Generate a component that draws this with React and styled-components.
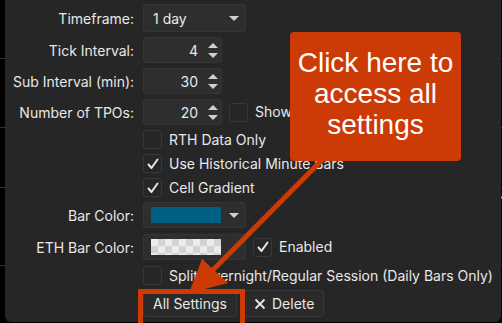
import React from 'react'
import styled, { createGlobalStyle } from 'styled-components'

const Global = createGlobalStyle`
    html, body {
        margin: 0;
        background: #000;
    }
    * { box-sizing: border-box; }
`

function Check() {
    return (
        <svg width="14" height="14" viewBox="0 0 14 14">
            <polyline points="2.5,7.5 5.5,11 11.5,2.5" fill="none" stroke="#e6e6e6" strokeWidth="2" strokeLinecap="round" strokeLinejoin="round" />
        </svg>
    )
}

function Checkbox({ checked }) {
    return <Box>{checked && <Check />}</Box>
}

function NumberField({ value }) {
    return (
        <NumberBox>
            <Value>{value}</Value>
            <Spinner>
                <Up />
                <Down />
            </Spinner>
        </NumberBox>
    )
}

function App() {
    return (
        <Page>
            <Global />
            <Panel>
                <Top>
                    <Row>
                        <Label>Timeframe:</Label>
                        <Select $h={28}>
                            <SelectText>1 day</SelectText>
                            <Caret />
                        </Select>
                    </Row>
                    <Row>
                        <Label>Tick Interval:</Label>
                        <NumberField value="4" />
                    </Row>
                    <Row>
                        <Label>Sub Interval (min):</Label>
                        <NumberField value="30" />
                    </Row>
                    <Row>
                        <Label>Number of TPOs:</Label>
                        <Inline>
                            <NumberField value="20" />
                            <Checkbox />
                            <Text>Show</Text>
                        </Inline>
                    </Row>
                </Top>
                <Bottom>
                    <Row $h={18}>
                        <span />
                        <Inline>
                            <Checkbox />
                            <Text>RTH Data Only</Text>
                        </Inline>
                    </Row>
                    <Row $h={18}>
                        <span />
                        <Inline>
                            <Checkbox checked />
                            <Text>Use Historical Minute Bars</Text>
                        </Inline>
                    </Row>
                    <Row $h={18}>
                        <span />
                        <Inline>
                            <Checkbox checked />
                            <Text>Cell Gradient</Text>
                        </Inline>
                    </Row>
                    <Row>
                        <Label>Bar Color:</Label>
                        <Select $h={26}>
                            <Swatch $color="#005f85" />
                            <Caret />
                        </Select>
                    </Row>
                    <Row>
                        <Label>ETH Bar Color:</Label>
                        <Inline>
                            <Select $h={26}>
                                <Swatch $checkered />
                            </Select>
                            <Checkbox checked />
                            <Text>Enabled</Text>
                        </Inline>
                    </Row>
                    <Row $h={18}>
                        <span />
                        <Inline>
                            <Checkbox />
                            <Text>Split Overnight/Regular Session (Daily Bars Only)</Text>
                        </Inline>
                    </Row>
                    <Row $h={27}>
                        <span />
                        <Buttons>
                            <Button>All Settings</Button>
                            <Button>
                                <svg width="12" height="12" viewBox="0 0 12 12">
                                    <path d="M1.5 1.5 L10.5 10.5 M10.5 1.5 L1.5 10.5" stroke="#e6e6e6" strokeWidth="1.8" />
                                </svg>
                                Delete
                            </Button>
                        </Buttons>
                    </Row>
                </Bottom>
            </Panel>

            <Callout>Click here to<br />access all<br />settings</Callout>
            <Annotation width="502" height="323" viewBox="0 0 502 323">
                <line x1="323" y1="159" x2="207" y2="276" stroke="#cc3a06" strokeWidth="5" />
                <polygon points="202,259 228,283 189,293" fill="#cc3a06" />
                <rect x="140.5" y="291.5" width="102" height="40" fill="none" stroke="#cc3a06" strokeWidth="5" />
            </Annotation>
        </Page>
    )
}

export default App

const Page = styled.div`
    position: relative;
    width: 502px;
    height: 323px;
    overflow: hidden;
    background-color: #000;
    background-image:
        linear-gradient(#333, #333),
        linear-gradient(#333, #333),
        linear-gradient(#333, #333),
        linear-gradient(#333, #333),
        linear-gradient(#2f8fdc, #2f8fdc);
    background-size: 100% 1px, 100% 1px, 100% 1px, 100% 1px, 2px 3px;
    background-position: 0 58px, 0 127px, 0 187px, 0 265px, 500px 196px;
    background-repeat: no-repeat;
    font-family: Inter, "Noto Sans", sans-serif;
    font-size: 14px;
    color: #e8e8e8;
`
const Panel = styled.div`
    margin-left: 5px;
    width: 496px;
    height: 322px;
    background: #262626;
    border-radius: 0 0 6px 6px;
    padding: 4px 8px 0;
    display: flex;
    flex-direction: column;
    gap: 5px;
`
const Top = styled.div`
    display: flex;
    flex-direction: column;
    gap: 5px;
`
const Bottom = styled.div`
    display: flex;
    flex-direction: column;
    gap: 6px;
`
const Row = styled.div`
    display: grid;
    grid-template-columns: 121px auto;
    column-gap: 9px;
    align-items: center;
    height: ${p => (p.$h ? p.$h + 'px' : 'auto')};
`
const Label = styled.div`
    text-align: right;
    white-space: nowrap;
`
const Inline = styled.div`
    display: flex;
    align-items: center;
    gap: 7px;
    white-space: nowrap;
`
const Text = styled.span`
    line-height: 18px;
`
const Select = styled.div`
    width: 103px;
    height: ${p => p.$h}px;
    background: #2e2e2e;
    border: 1px solid #353535;
    border-radius: 3px;
    display: flex;
    align-items: center;
    justify-content: space-between;
    padding: 0 6px 0 7px;
`
const SelectText = styled.span`
    padding-left: 2px;
`
const Caret = styled.span`
    width: 0;
    height: 0;
    border-left: 5px solid transparent;
    border-right: 5px solid transparent;
    border-top: 5px solid #d0d0d0;
`
const Swatch = styled.span`
    width: 70px;
    height: 16px;
    background: ${p => p.$checkered
        ? 'repeating-conic-gradient(#d3d3d3 0 25%, #ececec 0 50%) 0 0 / 14px 14px'
        : p.$color};
`
const NumberBox = styled.div`
    width: 79px;
    height: 26px;
    background: #2e2e2e;
    border: 1px solid #353535;
    border-radius: 3px;
    display: flex;
    align-items: center;
    padding-right: 2px;
`
const Value = styled.span`
    flex: 1;
    text-align: right;
    padding-right: 10px;
`
const Spinner = styled.div`
    display: flex;
    flex-direction: column;
    gap: 5px;
    width: 11px;
`
const Up = styled.span`
    width: 0;
    height: 0;
    border-left: 5px solid transparent;
    border-right: 5px solid transparent;
    border-bottom: 5px solid #cfcfcf;
`
const Down = styled.span`
    width: 0;
    height: 0;
    border-left: 5px solid transparent;
    border-right: 5px solid transparent;
    border-top: 5px solid #cfcfcf;
`
const Box = styled.span`
    width: 19px;
    height: 19px;
    flex: none;
    border: 1px solid #383838;
    border-radius: 3px;
    background: #262626;
    display: flex;
    align-items: center;
    justify-content: center;
`
const Buttons = styled.div`
    display: flex;
    gap: 7px;
    height: 27px;
`
const Button = styled.button`
    height: 27px;
    display: flex;
    align-items: center;
    gap: 6px;
    padding: 0 9px;
    background: #2a2a2a;
    border: 1px solid #383838;
    border-radius: 3px;
    color: #e8e8e8;
    font: inherit;
`
const Callout = styled.div`
    position: absolute;
    left: 290px;
    top: 32px;
    width: 171px;
    height: 129px;
    background: #cc3a06;
    border-radius: 4px;
    display: flex;
    align-items: center;
    justify-content: center;
    text-align: center;
    padding-bottom: 6px;
    color: #fff;
    font-family: "Liberation Sans", Arial, sans-serif;
    font-size: 28px;
    line-height: 31px;
`
const Annotation = styled.svg`
    position: absolute;
    left: 0;
    top: 0;
    pointer-events: none;
`
